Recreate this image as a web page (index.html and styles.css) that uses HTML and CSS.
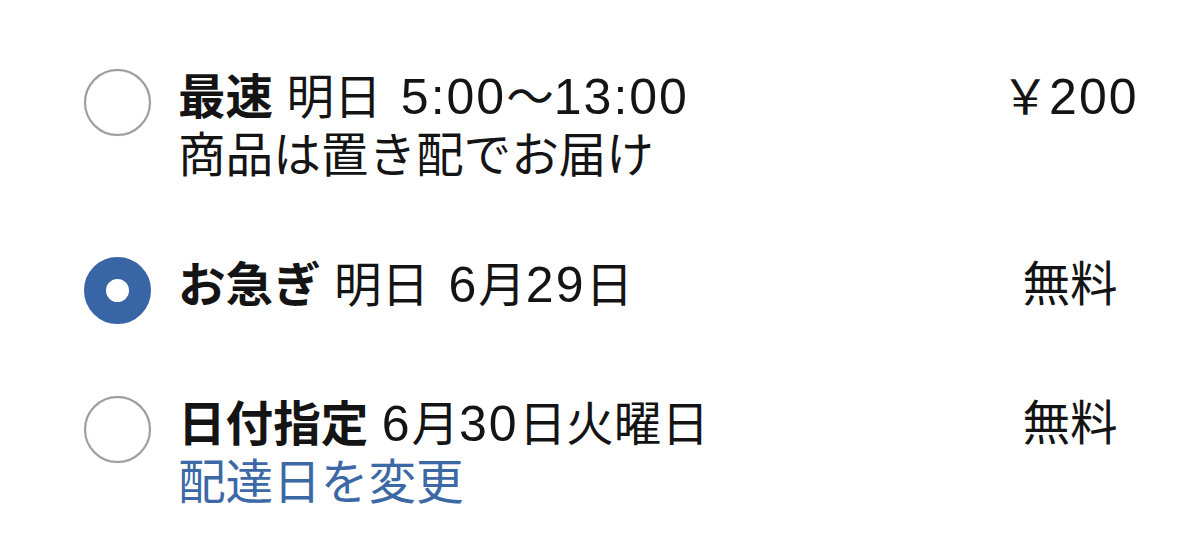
FILE: index.html
```html
<!DOCTYPE html>
<html lang="ja">
<head>
<meta charset="utf-8">
<link rel="stylesheet" href="styles.css">
</head>
<body>
<div class="options">
  <div class="option">
    <span class="radio"></span>
    <div class="info">
      <div class="line"><b>最速</b> 明日 <span class="num lead">5:00</span>〜<span class="num">13:00</span></div>
      <div class="line">商品は置き配でお届け</div>
    </div>
    <div class="price">￥<span class="num">200</span></div>
  </div>
  <div class="option">
    <span class="radio checked"></span>
    <div class="info">
      <div class="line"><b>お急ぎ</b> 明日 <span class="num lead">6</span>月<span class="num">29</span>日</div>
    </div>
    <div class="price">無料</div>
  </div>
  <div class="option">
    <span class="radio"></span>
    <div class="info">
      <div class="line"><b>日付指定</b> <span class="num">6</span>月<span class="num">30</span>日火曜日</div>
      <div class="line link">配達日を変更</div>
    </div>
    <div class="price">無料</div>
  </div>
</div>
</body>
</html>
```
FILE: styles.css
```css
html, body {
  margin: 0;
  background: #fff;
}
body {
  font-family: "Liberation Sans", "Noto Sans CJK JP", sans-serif;
  color: #141414;
}
.options {
  display: flex;
  flex-direction: column;
  gap: 71px;
  padding: 68px 30px 0 84px;
}
.option {
  display: flex;
  align-items: flex-start;
}
.radio {
  flex: none;
  width: 67px;
  height: 67px;
  box-sizing: border-box;
  border-radius: 50%;
  border: 2.5px solid #9c9c9c;
  box-shadow: inset 0 0 1px rgba(0,0,0,0.25), 0 0 1px rgba(0,0,0,0.2);
  margin-top: 1px;
  margin-right: 27px;
}
.radio.checked {
  border: 22px solid #3765a6;
  box-shadow: none;
}
.info {
  flex: 1;
  font-size: 47.6px;
  line-height: 58px;
}
.info b {
  font-weight: 700;
}
.num {
  font-size: 50px;
  letter-spacing: 2px;
  line-height: 58px;
}
.lead {
  margin-left: 6px;
}
.link {
  color: #3c68a5;
}
.price {
  flex: none;
  width: 200px;
  text-align: center;
  font-size: 47.6px;
  line-height: 58px;
}
```
